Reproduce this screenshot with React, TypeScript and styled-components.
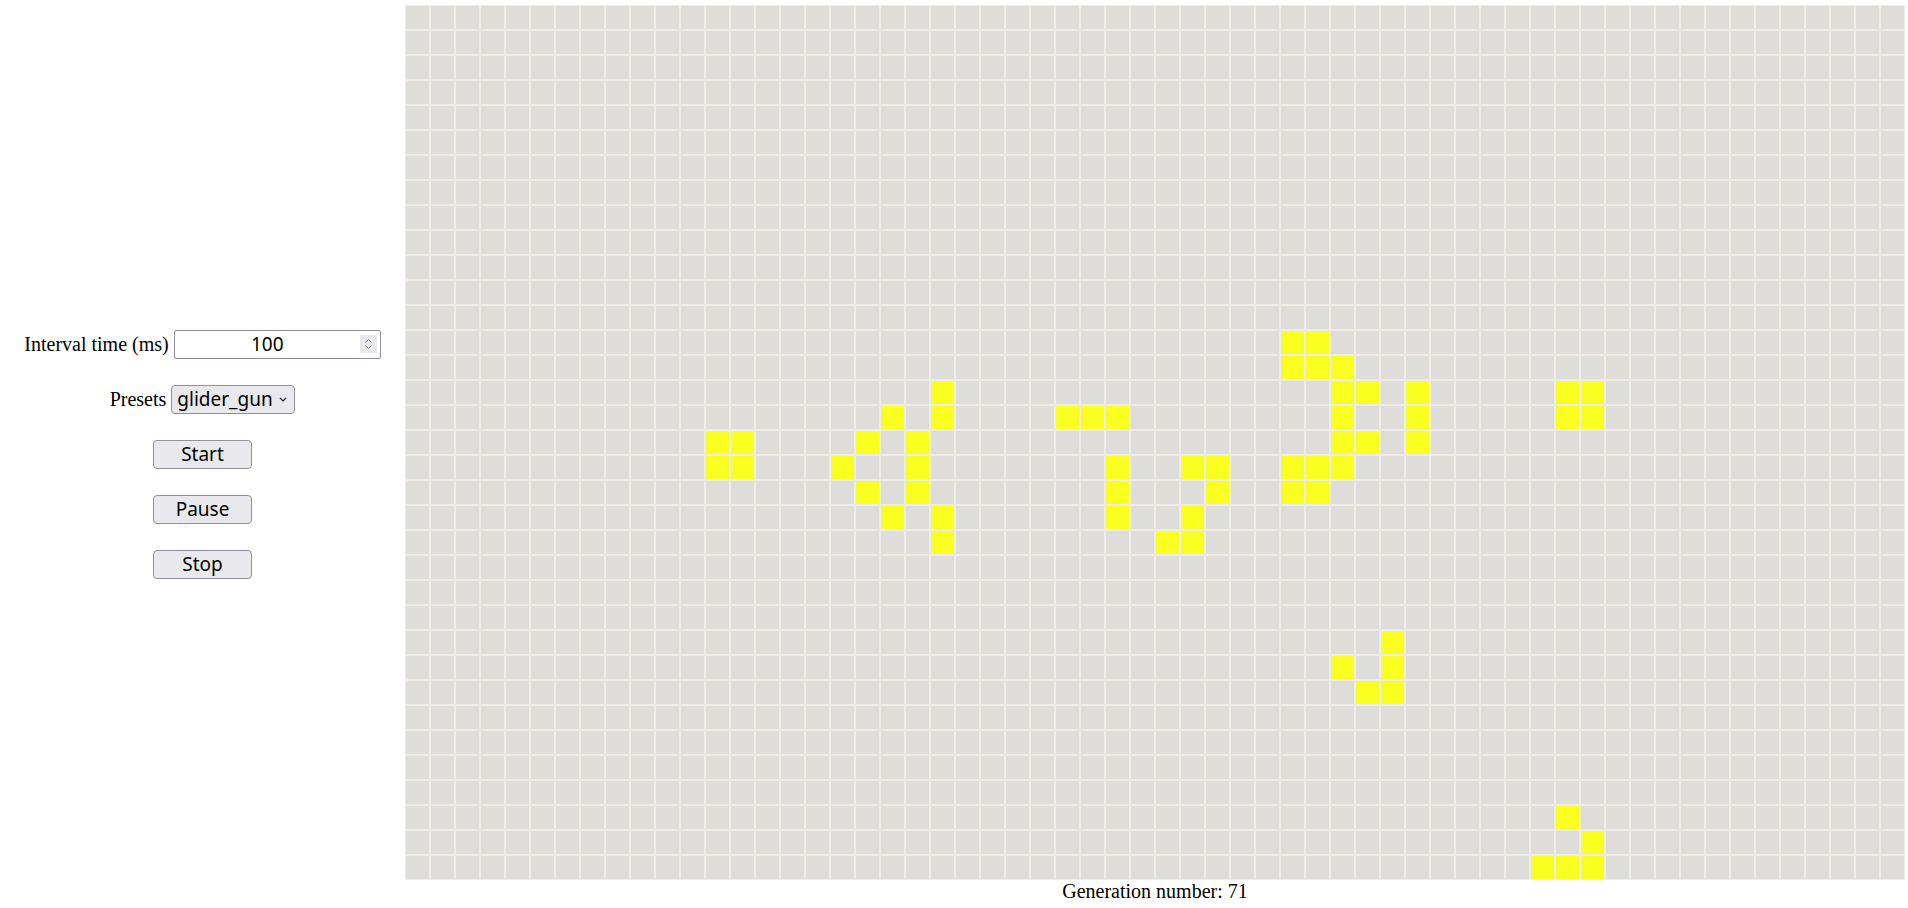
import React from 'react';
import styled, { createGlobalStyle } from 'styled-components';

const COLS = 60;
const ROWS = 35;

const LIVE: Record<number, number[]> = {
  13: [35, 36],
  14: [35, 36, 37],
  15: [21, 37, 38, 40, 46, 47],
  16: [19, 21, 26, 27, 28, 37, 40, 46, 47],
  17: [12, 13, 18, 20, 37, 38, 40],
  18: [12, 13, 17, 20, 28, 31, 32, 35, 36, 37],
  19: [18, 20, 28, 32, 35, 36],
  20: [19, 21, 28, 31],
  21: [21, 30, 31],
  25: [39],
  26: [37, 39],
  27: [38, 39],
  32: [46],
  33: [47],
  34: [45, 46, 47],
};

const UI_FONT = `"Noto Sans", "Liberation Sans", Arial, sans-serif`;

const GlobalStyle = createGlobalStyle`
  html, body {
    margin: 0;
    padding: 0;
    background: #ffffff;
  }
  body {
    font-family: "Liberation Serif", "Times New Roman", serif;
    font-size: 20px;
    color: #000;
  }
`;

const Page = styled.div`
  display: flex;
  align-items: center;
  padding-top: 5px;
`;

const Controls = styled.div`
  width: 405px;
  flex-shrink: 0;
  display: flex;
  flex-direction: column;
  align-items: center;
  gap: 26px;
`;

const Row = styled.div`
  display: flex;
  align-items: baseline;
  gap: 5px;
`;

const Label = styled.span`
  font-family: "Liberation Serif", "Times New Roman", serif;
  font-size: 20px;
`;

const NumberField = styled.div`
  display: inline-flex;
  align-items: center;
  box-sizing: border-box;
  width: 207px;
  height: 29px;
  border: 1px solid #8f8f9d;
  border-radius: 2px;
  background: #fff;
  padding-right: 3px;
`;

const NumberInput = styled.input`
  flex: 1;
  min-width: 0;
  border: none;
  outline: none;
  background: transparent;
  padding: 0;
  text-align: center;
  font-family: ${UI_FONT};
  font-size: 19px;
  color: #000;
  -moz-appearance: textfield;
  &::-webkit-inner-spin-button,
  &::-webkit-outer-spin-button {
    -webkit-appearance: none;
    margin: 0;
  }
`;

const SelectBox = styled.div`
  display: inline-flex;
  align-items: center;
  box-sizing: border-box;
  width: 124px;
  height: 29px;
  border: 1px solid #8f8f9d;
  border-radius: 4px;
  background: #e9e9ed;
  padding-right: 7px;
`;

const Select = styled.select`
  flex: 1;
  min-width: 0;
  appearance: none;
  -webkit-appearance: none;
  border: none;
  outline: none;
  background: transparent;
  padding: 0 0 0 5px;
  font-family: ${UI_FONT};
  font-size: 19px;
  color: #000;
`;

const Button = styled.button`
  box-sizing: border-box;
  width: 99px;
  height: 29px;
  padding: 0;
  border: 1px solid #8f8f9d;
  border-radius: 4px;
  background: #e9e9ed;
  font-family: ${UI_FONT};
  font-size: 19px;
  line-height: 1;
  color: #000;
  cursor: pointer;
`;

const Board = styled.div`
  display: flex;
  flex-direction: column;
  align-items: center;
`;

const Grid = styled.div`
  display: grid;
  grid-template-columns: repeat(${COLS}, 25px);
  grid-auto-rows: 25px;
`;

const Cell = styled.div<{ $alive: boolean }>`
  box-sizing: border-box;
  width: 25px;
  height: 25px;
  border: 1px solid #efece7;
  background: ${(p) => (p.$alive ? '#f9ff1e' : '#dfddda')};
`;

const Generation = styled.div`
  font-family: "Liberation Serif", "Times New Roman", serif;
  font-size: 20px;
`;

const SpinIcon = () => (
  <svg width="17" height="18" viewBox="0 0 17 18">
    <rect width="17" height="18" fill="#e9e9ed" />
    <path d="M5.5 7.5 L8.5 4.5 L11.5 7.5" stroke="#8a8a8a" strokeWidth="1" fill="none" />
    <path d="M5.5 10.5 L8.5 13.5 L11.5 10.5" stroke="#8a8a8a" strokeWidth="1" fill="none" />
  </svg>
);

const Chevron = () => (
  <svg width="8" height="5" viewBox="0 0 8 5">
    <path d="M1 1 L4 4 L7 1" stroke="#222" strokeWidth="1.2" fill="none" />
  </svg>
);

export default function App() {
  const cells: React.ReactNode[] = [];
  for (let r = 0; r < ROWS; r++) {
    const live = LIVE[r] || [];
    for (let c = 0; c < COLS; c++) {
      cells.push(<Cell key={`${r}-${c}`} $alive={live.includes(c)} />);
    }
  }
  return (
    <>
      <GlobalStyle />
      <Page>
        <Controls>
          <Row>
            <Label>Interval time (ms)</Label>
            <NumberField>
              <NumberInput type="number" defaultValue={100} />
              <SpinIcon />
            </NumberField>
          </Row>
          <Row>
            <Label>Presets</Label>
            <SelectBox>
              <Select defaultValue="glider_gun">
                <option value="glider_gun">glider_gun</option>
                <option value="random">random</option>
                <option value="blank">blank</option>
              </Select>
              <Chevron />
            </SelectBox>
          </Row>
          <Button>Start</Button>
          <Button>Pause</Button>
          <Button>Stop</Button>
        </Controls>
        <Board>
          <Grid>{cells}</Grid>
          <Generation>Generation number: 71</Generation>
        </Board>
      </Page>
    </>
  );
}
